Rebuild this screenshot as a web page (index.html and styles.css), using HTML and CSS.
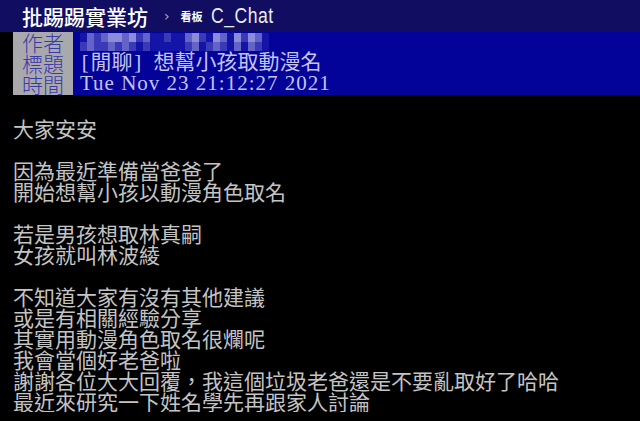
FILE: index.html
```html
<!DOCTYPE html>
<html lang="zh-Hant">
<head>
    <meta charset="UTF-8">
    <title>[閒聊] 想幫小孩取動漫名 - 看板 C_Chat - 批踢踢實業坊</title>
    <link rel="stylesheet" href="styles.css">
</head>
<body>
    <div class="topbar">
        <span class="site">批踢踢實業坊</span>
        <span class="sep">›</span>
        <span class="board-label">看板</span>
        <span class="board">C_Chat</span>
    </div>
    <div class="meta">
        <div class="labels">
            <div>作者</div>
            <div>標題</div>
            <div>時間</div>
        </div>
        <div class="values">
            <!-- 作者 ID 打碼 -->
            <div class="mosaic">
                <span class="m0"></span><span class="m2"></span><span class="m1"></span><span class="m2"></span><span class="m3"></span><span class="m3"></span><span class="m2"></span><span class="m3"></span><span class="m1"></span><span class="m2"></span><span class="m0"></span><span class="m0"></span><span class="m1"></span><span class="m0"></span><span class="m0"></span><span class="m2"></span><span class="m3"></span><span class="m1"></span><span class="m0"></span><span class="m3"></span><span class="m2"></span><span class="m0"></span><span class="m3"></span><span class="m1"></span><span class="m3"></span><span class="m2"></span><span class="m0"></span>
                <span class="m1"></span><span class="m2"></span><span class="m1"></span><span class="m1"></span><span class="m2"></span><span class="m1"></span><span class="m2"></span><span class="m1"></span><span class="m0"></span><span class="m1"></span><span class="m0"></span><span class="m0"></span><span class="m0"></span><span class="m0"></span><span class="m0"></span><span class="m1"></span><span class="m2"></span><span class="m0"></span><span class="m1"></span><span class="m2"></span><span class="m1"></span><span class="m0"></span><span class="m2"></span><span class="m0"></span><span class="m2"></span><span class="m1"></span><span class="m0"></span>
            </div>
            <div class="title"><span class="hw">[</span>閒聊<span class="hw">]</span><span class="hw"> </span>想幫小孩取動漫名</div>
            <div class="time">Tue Nov 23 21:12:27 2021</div>
        </div>
    </div>
    <div class="content">
        <p>大家安安</p>
        <p>&nbsp;</p>
        <p>因為最近準備當爸爸了</p>
        <p>開始想幫小孩以動漫角色取名</p>
        <p>&nbsp;</p>
        <p>若是男孩想取林真嗣</p>
        <p>女孩就叫林波綾</p>
        <p>&nbsp;</p>
        <p>不知道大家有沒有其他建議</p>
        <p>或是有相關經驗分享</p>
        <p>其實用動漫角色取名很爛呢</p>
        <p>我會當個好老爸啦</p>
        <p>謝謝各位大大回覆，我這個垃圾老爸還是不要亂取好了哈哈</p>
        <p>最近來研究一下姓名學先再跟家人討論</p>
    </div>
</body>
</html>
```

FILE: styles.css
```css
body {
    background: #000;
    margin: 0;
    padding: 0;
    font-family: "Noto Sans CJK TC", sans-serif;
    overflow: hidden;
}
.topbar {
    height: 32px;
    background: #110e62;
    display: flex;
    align-items: center;
    padding-left: 22px;
    color: #fff;
}
.site {
    font-size: 21px;
    font-weight: 500;
}
.sep {
    font-family: "DejaVu Sans", sans-serif;
    font-size: 14px;
    color: #a8a8d0;
    margin-left: 16px;
}
.board-label {
    font-size: 11px;
    font-weight: 700;
    margin-left: 11px;
}
.board {
    display: inline-block;
    font-family: "Liberation Sans", sans-serif;
    font-size: 22px;
    letter-spacing: 0.6px;
    margin-left: 8px;
    color: #ececec;
    transform: scaleX(0.8);
    transform-origin: left center;
}
.meta {
    margin-left: 13px;
    height: 63px;
    background: #03039a;
    display: flex;
}
.labels {
    width: 60px;
    background: #a9a9ad;
    color: #3a3aa6;
    font-size: 21px;
    line-height: 21px;
    font-weight: 300;
    text-align: center;
}
.values {
    padding-left: 7px;
    color: #c4c4ee;
    font-size: 21px;
    line-height: 21px;
}
.mosaic {
    display: grid;
    grid-template-columns: repeat(27, 7px);
    grid-auto-rows: 9px;
    height: 19px;
    padding-top: 1px;
}
.m0 { background: #1414a6; }
.m1 { background: #3a3ab8; }
.m2 { background: #6464c8; }
.m3 { background: #8c8cd8; }
.title {
    font-family: "Liberation Serif", "Noto Sans CJK TC", serif;
    white-space: pre;
}
.hw {
    display: inline-block;
    width: 10.5px;
    text-align: center;
}
.time {
    font-family: "Liberation Serif", serif;
    letter-spacing: 1px;
}
.content {
    padding: 23px 13px 0;
    color: #c4c4c4;
    font-size: 21px;
    line-height: 21px;
}
.content p {
    margin: 0;
    white-space: nowrap;
}
```
